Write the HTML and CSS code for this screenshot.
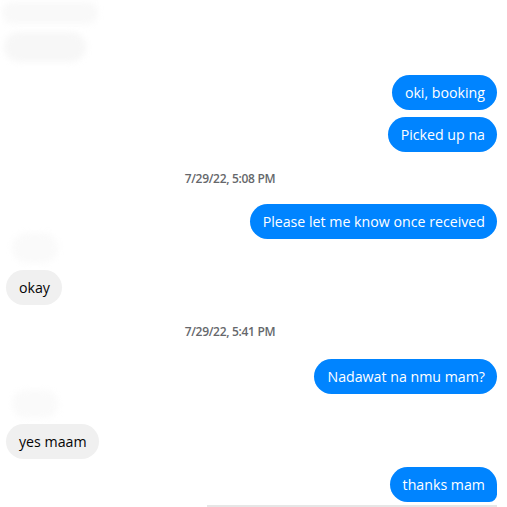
FILE: index.html
```html
<!DOCTYPE html>
<html>
<head>
<meta charset="utf-8">
<link rel="stylesheet" href="styles.css">
</head>
<body>
<div class="chat">
  <div class="blur blur-a"></div>
  <div class="blur blur-b"></div>
  <div class="row out r1"><div class="bubble me">oki, booking</div></div>
  <div class="row out r2"><div class="bubble me">Picked up na</div></div>
  <div class="stamp s1">7/29/22, 5:08 PM</div>
  <div class="row out r3"><div class="bubble me">Please let me know once received</div></div>
  <div class="blur blur-c"></div>
  <div class="row in r4"><div class="bubble them">okay</div></div>
  <div class="stamp s2">7/29/22, 5:41 PM</div>
  <div class="row out r5"><div class="bubble me">Nadawat na nmu mam?</div></div>
  <div class="blur blur-d"></div>
  <div class="row in r6"><div class="bubble them">yes maam</div></div>
  <div class="row out r7"><div class="bubble me last">thanks mam</div></div>
  <div class="footer-line"></div>
</div>
</body>
</html>
```
FILE: styles.css
```css
html, body {
  margin: 0;
  padding: 0;
  background: #ffffff;
}
body {
  font-family: "Open Sans", "Noto Sans", sans-serif;
  width: 507px;
  height: 507px;
  overflow: hidden;
}
.chat {
  display: flex;
  flex-direction: column;
  padding: 0 10px 0 6px;
}
.row {
  display: flex;
}
.row.out { justify-content: flex-end; }
.row.in { justify-content: flex-start; }
.bubble {
  font-size: 14.2px;
  line-height: 21px;
  padding: 7px 12px 7px 13px;
  border-radius: 18px;
  white-space: nowrap;
  letter-spacing: 0;
}
.bubble.me {
  background: #0084ff;
  color: #ffffff;
}
.bubble.them {
  background: #f0f0f0;
  color: #050505;
}
.bubble.last {
  border-bottom-right-radius: 8px;
}
.stamp {
  align-self: center;
  margin-right: 43px;
  font-size: 12px;
  font-weight: 600;
  color: #65676b;
  line-height: 14px;
  letter-spacing: -0.3px;
}
.blur {
  background: #f2f2f2;
  filter: blur(3px);
  border-radius: 16px;
}
.blur-a {
  width: 96px;
  height: 22px;
  margin: 2px 0 0 -4px;
  background: #f9f9f9;
}
.blur-b {
  width: 82px;
  height: 30px;
  margin: 8px 0 0 -2px;
  background: #f7f7f7;
}
.blur-c {
  width: 46px;
  height: 30px;
  margin: -6px 0 0 6px;
  background: #fafafa;
}
.blur-d {
  width: 46px;
  height: 28px;
  margin: -4px 0 0 6px;
  background: #fafafa;
}
.r1 { margin-top: 13px; }
.r2 { margin-top: 7px; }
.s1 { margin-top: 20px; }
.r3 { margin-top: 18px; }
.r4 { margin-top: 7px; }
.s2 { margin-top: 20px; }
.r5 { margin-top: 20px; }
.r6 { margin-top: 6px; }
.r7 { margin-top: 8px; }
.footer-line {
  align-self: flex-end;
  width: 290px;
  height: 2px;
  margin-top: 3px;
  background: #e6e6e6;
}
```
